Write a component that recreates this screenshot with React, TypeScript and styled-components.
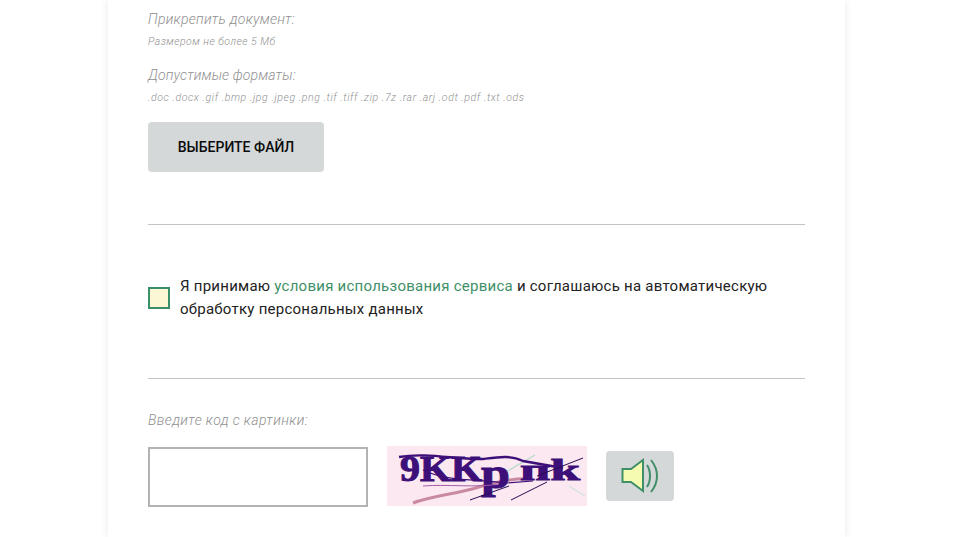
import React from "react";
import styled, { createGlobalStyle } from "styled-components";

const App: React.FC = () => {
  return (
    <>
      <GlobalStyle />
      <Card>
        <Hint>Прикрепить документ:</Hint>
        <SmallHint $spacing={0.48}>Размером не более 5 Мб</SmallHint>
        <Hint $top={17} $spacing={0.15}>Допустимые форматы:</Hint>
        <SmallHint $spacing={0.58}>
          .doc .docx .gif .bmp .jpg .jpeg .png .tif .tiff .zip .7z .rar .arj .odt .pdf .txt .ods
        </SmallHint>
        <FileButton type="button">Выберите файл</FileButton>

        <Divider $top={52} />

        <AgreeRow>
          <CheckBox />
          <AgreeText>
            Я принимаю <TermsLink href="#">условия использования сервиса</TermsLink> и соглашаюсь
            на автоматическую обработку персональных данных
          </AgreeText>
        </AgreeRow>

        <Divider $top={57} />

        <Hint $top={32} $spacing={0.4}>Введите код с картинки:</Hint>
        <CaptchaRow>
          <CodeInput type="text" />
          <CaptchaImage />
          <SoundButton type="button" aria-label="Прослушать код">
            <SpeakerIcon />
          </SoundButton>
        </CaptchaRow>
      </Card>
    </>
  );
};

export default App;

const CaptchaImage: React.FC = () => (
  <CaptchaSvg viewBox="0 0 200 60">
    <rect width="200" height="60" fill="#fce8f0" />
    <path d="M26 57 C44 50 70 48 92 41 C108 36 124 32 144 33" fill="none" stroke="#c98aa0" strokeWidth="3" />
    <path d="M112 30 L148 9" fill="none" stroke="#b5dccb" strokeWidth="1.2" />
    <path d="M182 40 L198 50" fill="none" stroke="#cfe3dc" strokeWidth="1.2" />
    <CaptchaText x="13" y="35" fontSize="36" textLength="82" lengthAdjust="spacingAndGlyphs">
      9KK
    </CaptchaText>
    <CaptchaText x="94" y="42" fontSize="44" textLength="29" lengthAdjust="spacingAndGlyphs">
      p
    </CaptchaText>
    <CaptchaText x="133" y="34" fontSize="30" textLength="60" lengthAdjust="spacingAndGlyphs">
      пk
    </CaptchaText>
    <path d="M12 11 C40 6 70 14 96 13 C112 11 124 9 136 15 L176 22" fill="none" stroke="#3d0f78" strokeWidth="2.4" />
    <path d="M36 24 C60 36 90 33 120 37 L146 35" fill="none" stroke="#3d0f78" strokeWidth="1.2" />
    <path d="M83 54 L122 40" fill="none" stroke="#2a0a55" strokeWidth="1" />
    <path d="M124 54 L160 36" fill="none" stroke="#2a0a55" strokeWidth="1" />
    <path d="M150 30 L196 12" fill="none" stroke="#2a0a55" strokeWidth="1" />
    <path d="M36 40 C60 38 90 42 112 38" fill="none" stroke="#a45ca8" strokeWidth="1" />
  </CaptchaSvg>
);

const SpeakerIcon: React.FC = () => (
  <svg width="38" height="36" viewBox="0 0 38 36" fill="none">
    <path d="M1.5 11 H10 L22 2 V33 L10 24 H1.5 Z" fill="#f5fbb0" stroke="#3f8f68" strokeWidth="2" />
    <path d="M26 7 C30 13 30 23 26 29" stroke="#3f8f68" strokeWidth="2" />
    <path d="M30 2 C38 12 38 24 30 34" stroke="#3f8f68" strokeWidth="2" />
  </svg>
);

const GlobalStyle = createGlobalStyle`
  html, body {
    margin: 0;
    height: 100%;
    overflow: hidden;
    background: #fff;
    font-family: "Roboto", "Liberation Sans", sans-serif;
  }
`;

const Card = styled.main`
  box-sizing: border-box;
  width: 737px;
  height: 537px;
  margin-left: 108px;
  padding: 10px 40px 0;
  background: #fff;
  box-shadow: 0 0 8px rgba(0, 0, 0, 0.09);
`;

const Hint = styled.div<{ $top?: number; $spacing?: number }>`
  margin-top: ${(p) => p.$top ?? 0}px;
  font-size: 14px;
  line-height: 18px;
  font-style: italic;
  font-weight: 300;
  letter-spacing: ${(p) => p.$spacing ?? 0.27}px;
  color: #8f8f8f;
`;

const SmallHint = styled.div<{ $spacing: number }>`
  margin-top: 7px;
  font-size: 10.5px;
  line-height: 14px;
  font-style: italic;
  font-weight: 300;
  letter-spacing: ${(p) => p.$spacing}px;
  color: #8f8f8f;
`;

const FileButton = styled.button`
  display: block;
  width: 176px;
  height: 50px;
  margin-top: 17px;
  padding: 0;
  border: none;
  border-radius: 4px;
  background: #d4d8d9;
  color: #0b0b0b;
  font-family: inherit;
  font-size: 14px;
  font-weight: 500;
  text-transform: uppercase;
`;

const Divider = styled.hr<{ $top: number }>`
  height: 1px;
  margin: ${(p) => p.$top}px 0 0;
  border: none;
  background: #c4c4c4;
`;

const AgreeRow = styled.div`
  display: flex;
  align-items: center;
  gap: 10px;
  margin-top: 50px;
`;

const CheckBox = styled.span`
  flex: none;
  box-sizing: border-box;
  width: 22px;
  height: 22px;
  border: 2px solid #38906a;
  background: #fbf6d3;
`;

const AgreeText = styled.p`
  margin: 0;
  font-size: 15px;
  line-height: 23px;
  letter-spacing: 0.25px;
  color: #222;
  max-width: 610px;
`;

const TermsLink = styled.a`
  color: #3f8f68;
  text-decoration: none;
`;

const CaptchaRow = styled.div`
  display: flex;
  align-items: flex-start;
  gap: 19px;
  margin-top: 17px;
`;

const CodeInput = styled.input`
  box-sizing: border-box;
  width: 220px;
  height: 60px;
  margin-top: 1px;
  border: 2px solid #b3b3b3;
  background: #fff;
`;

const CaptchaSvg = styled.svg`
  display: block;
  width: 200px;
  height: 60px;
`;

const CaptchaText = styled.text`
  font-family: "Liberation Serif", serif;
  font-weight: 700;
  fill: #3d0f78;
  stroke: #3d0f78;
  stroke-width: 1px;
`;

const SoundButton = styled.button`
  display: flex;
  align-items: center;
  justify-content: center;
  width: 68px;
  height: 50px;
  margin-top: 5px;
  padding: 0;
  border: none;
  border-radius: 4px;
  background: #d4d8d9;
`;
